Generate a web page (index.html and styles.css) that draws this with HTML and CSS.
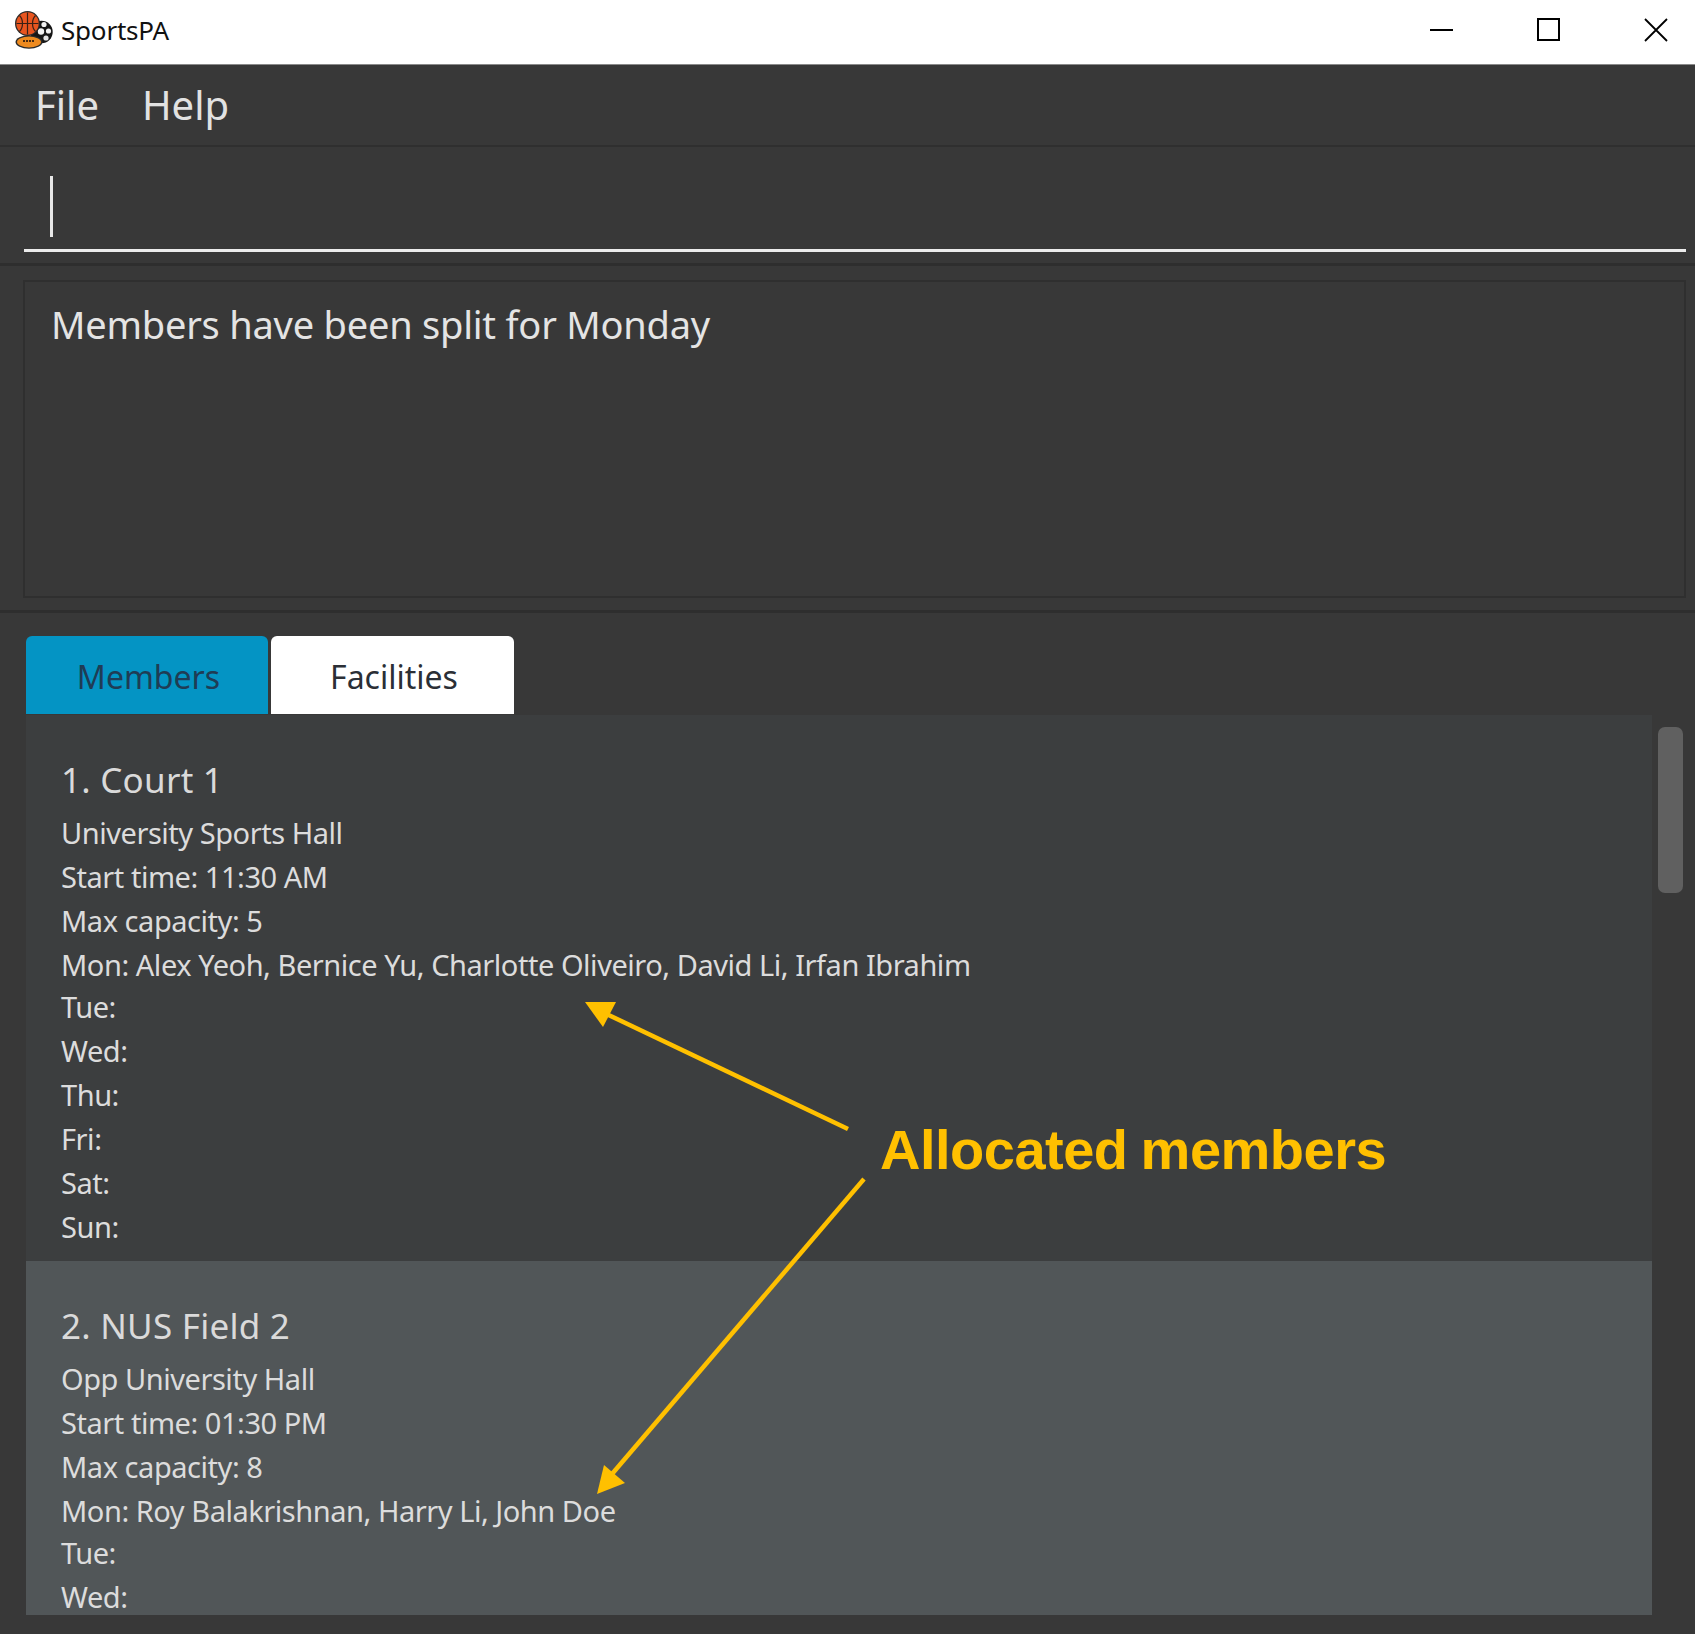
FILE: index.html
```html
<!DOCTYPE html>
<html lang="en">
<head>
<meta charset="utf-8">
<title>SportsPA</title>
<link rel="stylesheet" href="styles.css">
</head>
<body>
<div class="window">
  <header class="titlebar">
    <svg class="app-icon" viewBox="0 0 39 38" width="39" height="38" aria-hidden="true">
      <circle cx="27.5" cy="21" r="11.2" fill="#161616"/>
      <circle cx="22" cy="15" r="3" fill="#f2f2f2"/>
      <circle cx="30" cy="13.5" r="2.6" fill="#f2f2f2"/>
      <circle cx="27" cy="20.5" r="3.2" fill="#f2f2f2"/>
      <circle cx="34.5" cy="20" r="2.6" fill="#f2f2f2"/>
      <circle cx="32" cy="27" r="2.6" fill="#e4e4e4"/>
      <circle cx="13.5" cy="12.5" r="12.5" fill="#2a2a2a"/>
      <circle cx="13.5" cy="12.5" r="11.2" fill="#e8551f"/>
      <path d="M13.5 1.5v22M2.5 12.5h22M5.5 4.5c4 4 4 12 0 16M21.5 4.5c-4 4-4 12 0 16" fill="none" stroke="#3a2015" stroke-width="1.2"/>
      <ellipse cx="15" cy="31" rx="13.5" ry="6.8" fill="#2a2a2a"/>
      <ellipse cx="15" cy="31" rx="12" ry="5.4" fill="#ed8a1f"/>
      <path d="M9 30h12" stroke="#4a2a10" stroke-width="2" stroke-dasharray="2 1"/>
    </svg>
    <span class="app-title">SportsPA</span>
    <div class="window-controls">
      <svg class="ctl" viewBox="0 0 24 24" width="24" height="24" aria-hidden="true"><path d="M0 12h23" stroke="#000" stroke-width="2"/></svg>
      <svg class="ctl" viewBox="0 0 24 24" width="24" height="24" aria-hidden="true"><rect x="1" y="1" width="21" height="21" fill="none" stroke="#000" stroke-width="2"/></svg>
      <svg class="ctl" viewBox="0 0 24 24" width="24" height="24" aria-hidden="true"><path d="M1 1l22 22M23 1L1 23" stroke="#000" stroke-width="1.8"/></svg>
    </div>
  </header>

  <nav class="menubar">
    <span class="menu-item">File</span>
    <span class="menu-item">Help</span>
  </nav>

  <section class="command">
    <div class="command-field"><span class="caret"></span></div>
  </section>

  <section class="result">
    <div class="result-box">Members have been split for Monday</div>
  </section>

  <main class="lists">
    <div class="tabs">
      <div class="tab tab-active">Members</div>
      <div class="tab">Facilities</div>
    </div>
    <div class="list-area">
      <div class="list">
        <article class="card">
          <h2 class="card-title">1. Court 1</h2>
          <p class="row">University Sports Hall</p>
          <p class="row">Start time: 11:30 AM</p>
          <p class="row">Max capacity: 5</p>
          <p class="row row-mon">Mon: Alex Yeoh, Bernice Yu, Charlotte Oliveiro, David Li, Irfan Ibrahim</p>
          <p class="row">Tue:</p>
          <p class="row">Wed:</p>
          <p class="row">Thu:</p>
          <p class="row">Fri:</p>
          <p class="row">Sat:</p>
          <p class="row">Sun:</p>
        </article>
        <article class="card card-alt">
          <h2 class="card-title">2. NUS Field 2</h2>
          <p class="row">Opp University Hall</p>
          <p class="row">Start time: 01:30 PM</p>
          <p class="row">Max capacity: 8</p>
          <p class="row row-mon">Mon: Roy Balakrishnan, Harry Li, John Doe</p>
          <p class="row">Tue:</p>
          <p class="row">Wed:</p>
        </article>
      </div>
      <div class="scrolltrack"><div class="thumb"></div></div>
    </div>
  </main>

  <svg class="annotation" viewBox="0 0 1695 1634" width="1695" height="1634" aria-hidden="true">
    <path d="M848 1129L596 1009" stroke="#ffc000" stroke-width="4.5" fill="none"/>
    <polygon points="585,1002 616,1002 603,1027" fill="#ffc000"/>
    <path d="M864 1179L612 1474" stroke="#ffc000" stroke-width="4.5" fill="none"/>
    <polygon points="597,1494 604,1465 625,1483" fill="#ffc000"/>
  </svg>
  <div class="callout">Allocated members</div>
</div>
</body>
</html>
```
FILE: styles.css
```css
* { box-sizing: border-box; }
html, body { margin: 0; padding: 0; }
body { font-family: "Noto Sans", "Open Sans", sans-serif; background: #383838; }

.window { position: relative; width: 1695px; height: 1634px; overflow: hidden; display: flex; flex-direction: column; background: #383838; }

.titlebar { height: 65px; flex: none; display: flex; align-items: center; background: #fff; border-bottom: 1px solid #8a8a8a; padding: 0 0 5px 14px; }
.app-icon { flex: none; }
.app-title { margin-left: 8px; font-size: 26px; color: #111; letter-spacing: -0.2px; }
.window-controls { margin-left: auto; display: flex; align-items: center; gap: 83px; padding-right: 27px; }
.ctl { display: block; }

.menubar { height: 82px; flex: none; display: flex; align-items: center; gap: 43px; padding: 0 0 2px 35px; border-bottom: 2px solid #2f2f2f; }
.menu-item { font-size: 40px; color: #e2e2e2; }

.command { height: 119px; flex: none; padding: 0 9px 0 24px; border-bottom: 3px solid #2e2e2e; }
.command-field { height: 105px; border-bottom: 3px solid #ececec; padding: 29px 0 0 26px; }
.caret { display: block; width: 3px; height: 61px; background: #e8e8e8; }

.result { height: 347px; flex: none; padding: 14px 9px 12px 23px; border-bottom: 3px solid #2e2e2e; }
.result-box { height: 100%; border: 2px solid #2f2f2f; padding: 16px 26px; font-size: 38px; line-height: 52px; color: #e4e4e4; letter-spacing: -0.22px; }

.lists { flex: 1; min-height: 0; padding: 23px 0 19px 26px; display: flex; flex-direction: column; }

.tabs { display: flex; gap: 3px; height: 79px; flex: none; }
.tab { width: 243px; height: 78px; display: flex; align-items: center; justify-content: center; padding: 2px 0 0 3px; font-size: 32px; color: #2b2f36; background: #fff; border-radius: 6px 6px 0 0; }
.tab-active { width: 242px; background: #0494c4; color: #1f3c55; }

.list-area { flex: 1; min-height: 0; display: flex; }
.list { width: 1626px; flex: none; overflow: hidden; }
.card { height: 546px; padding: 40px 35px 0; background: #3c3e3f; }
.card-alt { background: #515658; }
.card-title { margin: 0; height: 56px; font-size: 35px; font-weight: 400; line-height: 50px; color: #dadada; letter-spacing: 0.25px; }
.row { margin: 0; height: 44px; font-size: 29px; line-height: 44px; color: #dcdcdc; letter-spacing: -0.46px; white-space: nowrap; }
.row-mon { margin-bottom: -2px; }

.scrolltrack { flex: 1; padding: 12px 12px 0 6px; }
.thumb { height: 166px; border-radius: 7px; background: #606060; }

.annotation { position: absolute; left: 0; top: 0; pointer-events: none; }
.callout { position: absolute; left: 880px; top: 1118px; font-family: "Liberation Sans", Arial, sans-serif; font-weight: 700; font-size: 56px; line-height: 64px; color: #ffc000; letter-spacing: -0.5px; word-spacing: -2px; white-space: nowrap; }
```
